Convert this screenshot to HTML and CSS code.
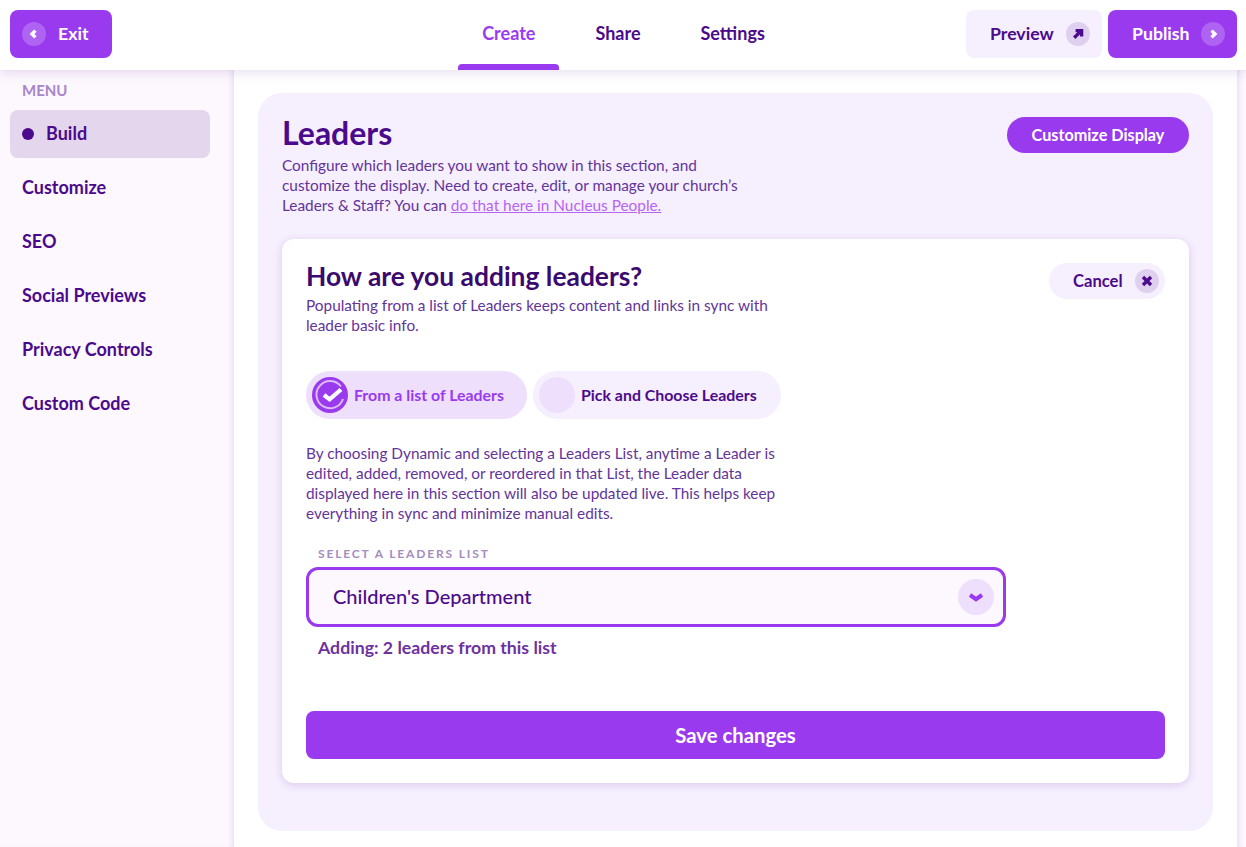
FILE: index.html
```html
<!DOCTYPE html>
<html lang="en">
<head>
<meta charset="utf-8">
<title>Leaders</title>
<link rel="stylesheet" href="styles.css">
</head>
<body>
<div class="app">
  <header class="topbar">
    <button class="btn btn-primary btn-exit">
      <span class="ico ico-light"><svg viewBox="0 0 24 24" width="24" height="24"><path d="M13.4 8.6 10 12l3.4 3.4" class="stroke-white"/></svg></span>
      <span class="btn-text">Exit</span>
    </button>
    <nav class="tabs">
      <a class="tab tab-active">Create</a>
      <a class="tab">Share</a>
      <a class="tab">Settings</a>
    </nav>
    <div class="actions">
      <button class="btn btn-soft btn-preview">
        <span class="btn-text">Preview</span>
        <span class="ico ico-dark"><svg viewBox="0 0 24 24" width="24" height="24"><path d="M8.2 15.8 14.6 9.4M9.6 8.6h6v6" class="stroke-dark"/></svg></span>
      </button>
      <button class="btn btn-primary btn-publish">
        <span class="btn-text">Publish</span>
        <span class="ico ico-light"><svg viewBox="0 0 24 24" width="24" height="24"><path d="M10.6 8.6 14 12l-3.4 3.4" class="stroke-white"/></svg></span>
      </button>
    </div>
  </header>
  <div class="body">
    <aside class="sidebar">
      <div class="menu-label">MENU</div>
      <a class="menu-item menu-active"><span class="dot"></span>Build</a>
      <a class="menu-item">Customize</a>
      <a class="menu-item">SEO</a>
      <a class="menu-item">Social Previews</a>
      <a class="menu-item">Privacy Controls</a>
      <a class="menu-item">Custom Code</a>
    </aside>
    <main class="main">
      <section class="panel">
        <div class="panel-head">
          <div>
            <h1 class="title">Leaders</h1>
            <p class="desc">Configure which leaders you want to show in this section, and customize the display. Need to create, edit, or manage your church’s Leaders &amp; Staff? You can <a class="link">do that here in Nucleus People.</a></p>
          </div>
          <button class="pill-primary">Customize Display</button>
        </div>
        <div class="card">
          <div class="card-head">
            <div>
              <h2 class="card-title">How are you adding leaders?</h2>
              <p class="card-desc">Populating from a list of Leaders keeps content and links in sync with leader basic info.</p>
            </div>
            <button class="cancel">
              <span class="cancel-text">Cancel</span>
              <span class="ico ico-dark"><svg viewBox="0 0 24 24" width="24" height="24"><path d="m8 8 8 8M16 8l-8 8" class="stroke-dark"/></svg></span>
            </button>
          </div>
          <div class="choices">
            <div class="choice choice-on">
              <svg class="check" viewBox="0 0 36 36" width="36" height="36">
                <circle cx="18" cy="18" r="18" fill="#9a3aef"/>
                <path d="M29 9.5A13.6 13.6 0 1 0 31 22" fill="none" stroke="#dcbcf8" stroke-width="2"/>
                <path d="m12 18 5.6 4.4L29 12.5" fill="none" stroke="#fff" stroke-width="4.2"/>
              </svg>
              <span class="choice-text">From a list of Leaders</span>
            </div>
            <div class="choice choice-off">
              <span class="radio"></span>
              <span class="choice-text">Pick and Choose Leaders</span>
            </div>
          </div>
          <p class="explain">By choosing Dynamic and selecting a Leaders List, anytime a Leader is edited, added, removed, or reordered in that List, the Leader data displayed here in this section will also be updated live. This helps keep everything in sync and minimize manual edits.</p>
          <div class="field-label">SELECT A LEADERS LIST</div>
          <div class="select">
            <span class="select-text">Children's Department</span>
            <span class="select-ico"><svg viewBox="0 0 36 36" width="36" height="36"><path d="m12 16 6 4.2 6-4.2" fill="none" stroke="#9a3aef" stroke-width="4"/></svg></span>
          </div>
          <div class="adding">Adding: 2 leaders from this list</div>
          <button class="save">Save changes</button>
        </div>
      </section>
    </main>
    <div class="edge"></div>
  </div>
</div>
</body>
</html>
```
FILE: styles.css
```css
* { box-sizing: border-box; }
html, body { margin: 0; height: 100%; }
body { font-family: "Lato", "Liberation Sans", sans-serif; color: #4b0a8c; background: #fff; overflow: hidden; }
button { font-family: inherit; border: 0; cursor: pointer; }
p, h1, h2 { margin: 0; }
.app { display: flex; flex-direction: column; height: 847px; }
.topbar { position: relative; z-index: 2; flex: none; height: 70px; background: #fff; box-shadow: 0 2px 12px rgba(75,10,140,.14); display: grid; grid-template-columns: 1fr auto 1fr; align-items: flex-start; padding: 10px 9px 0 10px; }
.btn { height: 48px; border-radius: 8px; display: inline-flex; align-items: center; font-size: 17.7px; font-weight: 700; padding: 0; }
.btn-text { padding-bottom: 2px; }
.btn-primary { background: #9a3aef; color: #fff; }
.btn-soft { background: #f6effe; color: #4b0a8c; }
.btn-exit { width: 102px; padding-left: 12px; gap: 12px; justify-self: start; }
.btn-preview { width: 136px; padding: 0 12px 0 24px; justify-content: space-between; }
.btn-publish { width: 129px; padding: 0 12px 0 24px; justify-content: space-between; }
.ico { width: 24px; height: 24px; border-radius: 50%; display: inline-flex; flex: none; }
.ico-light { background: #ae63f2; }
.ico-dark { background: #dfd0ef; }
.stroke-white, .stroke-dark { fill: none; stroke-width: 3.4; }
.stroke-white { stroke: #fff; }
.stroke-dark { stroke: #4b0a8c; }
.tabs { display: flex; gap: 12px; margin-top: -10px; height: 70px; }
.tab { height: 70px; display: flex; align-items: center; justify-content: center; font-size: 18px; font-weight: 700; color: #4b0a8c; padding: 0 24px 4px; position: relative; }
.tab-active { color: #9a3aef; }
.tab-active::after { content: ""; position: absolute; left: 0; right: 0; bottom: 0; height: 6px; background: #9a3aef; border-radius: 4px 4px 0 0; }
.actions { display: flex; gap: 6px; justify-self: end; }
.body { flex: 1; display: flex; min-height: 0; }
.sidebar { width: 234px; flex: none; background: #fdf8fe; box-shadow: inset -5px 0 6px -4px rgba(75,10,140,.14); padding: 10px 24px 0 10px; }
.menu-label { font-size: 15px; font-weight: 700; color: #a985cc; padding-left: 12px; line-height: 20px; margin-bottom: 10px; }
.menu-item { display: flex; align-items: center; height: 48px; margin-bottom: 6px; padding: 0 0 3px 12px; font-size: 18px; font-weight: 700; color: #4b0a8c; border-radius: 8px; }
.menu-active { background: #e3d6ed; }
.dot { width: 12px; height: 12px; border-radius: 50%; background: #4b0a8c; margin: 3px 12px 0 0; }
.main { flex: 1; min-width: 0; padding: 23px 24px 0; background: #fff; }
.edge { width: 9px; flex: none; background: #fdf8fe; box-shadow: inset 5px 0 6px -4px rgba(75,10,140,.14); }
.panel { background: #f6effe; border-radius: 24px; height: 738px; padding: 24px; }
.panel-head { display: flex; justify-content: space-between; align-items: flex-start; }
.title { font-size: 32px; line-height: 32px; font-weight: 700; color: #4b0a8c; }
.desc { width: 470px; margin-top: 6px; font-size: 15.36px; line-height: 20px; color: #63349a; }
.link { color: #b565f0; text-decoration: underline; }
.pill-primary { width: 182px; height: 36px; border-radius: 18px; background: #9a3aef; color: #fff; font-size: 16.2px; font-weight: 700; padding: 0 0 2px; }
.card { margin-top: 24px; height: 544px; background: #fff; border-radius: 12px; box-shadow: 0 2px 8px rgba(75,10,140,.16); padding: 24px; display: flex; flex-direction: column; }
.card-head { display: flex; justify-content: space-between; align-items: flex-start; }
.card-title { font-size: 26.4px; line-height: 26px; font-weight: 700; color: #3a0a6e; }
.card-desc { width: 480px; margin-top: 6px; font-size: 15.36px; line-height: 20px; color: #63349a; }
.cancel { width: 116px; height: 36px; border-radius: 18px; background: #f6effe; color: #4b0a8c; font-size: 16.6px; font-weight: 700; display: inline-flex; align-items: center; justify-content: space-between; padding: 0 6px 0 24px; }
.choices { display: flex; gap: 6px; margin-top: 36px; }
.choice { height: 48px; border-radius: 24px; display: flex; align-items: center; padding-left: 6px; gap: 6px; font-size: 15.9px; font-weight: 700; }
.choice-text { padding-bottom: 2px; }
.choice-on { width: 221px; background: #eedffd; color: #9a3aef; }
.choice-off { width: 248px; background: #f6effe; color: #4b0a8c; }
.check { flex: none; }
.radio { width: 36px; height: 36px; border-radius: 50%; background: #eedffd; flex: none; }
.explain { width: 480px; margin-top: 24px; font-size: 15.36px; line-height: 20px; color: #63349a; }
.field-label { margin-top: 23px; padding-left: 12px; font-size: 12px; line-height: 16px; font-weight: 700; letter-spacing: 1.85px; color: #a48cc0; }
.select { margin-top: 5px; width: 700px; height: 60px; border: 3px solid #9a3aef; border-radius: 12px; background: #fdf8fe; display: flex; align-items: center; justify-content: space-between; padding: 0 9px 0 24px; font-size: 20px; font-weight: 500; color: #4b0a8c; }
.select-text { padding-bottom: 2px; }
.select-ico { width: 36px; height: 36px; border-radius: 50%; background: #eedffd; display: flex; }
.adding { margin-top: 10px; padding-left: 12px; font-size: 17.7px; line-height: 22px; font-weight: 700; color: #6d32a0; }
.save { margin-top: 52px; width: 100%; height: 48px; border-radius: 8px; background: #9a3aef; color: #fff; font-size: 20.3px; font-weight: 700; flex: none; padding: 0 0 1px; }
```
